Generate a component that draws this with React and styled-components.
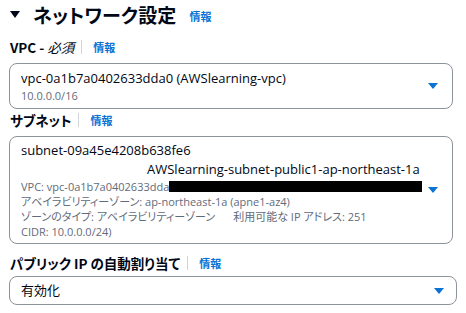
import { createGlobalStyle, styled } from "styled-components";

const GlobalStyle = createGlobalStyle`
  body {
    margin: 0;
    background: #ffffff;
    font-family: "Open Sans", "Noto Sans CJK JP", sans-serif;
    font-feature-settings: "palt";
    color: #000716;
  }
`;

const Page = styled.div`
  width: 466px;
  height: 313px;
  overflow: hidden;
  padding: 0 0 0 10px;
  box-sizing: border-box;
`;

const Header = styled.div`
  display: flex;
  align-items: center;
  height: 28px;
`;

const Caret = styled.span`
  width: 0;
  height: 0;
  border-left: 5px solid transparent;
  border-right: 5px solid transparent;
  border-top: 7px solid #000716;
  margin: 1px 13px 0 0;
`;

const Title = styled.h2`
  margin: 0;
  font-size: 19px;
  font-weight: 700;
  letter-spacing: 0.2px;
  font-family: "Noto Sans CJK JP", sans-serif;
`;

const InfoLink = styled.a`
  color: #0972d3;
  font-size: 11px;
  font-weight: 700;
  font-family: "Noto Sans CJK JP", sans-serif;
  margin-left: ${p => (p.$big ? "13px" : "0")};
  margin-top: ${p => (p.$big ? "4px" : "0")};
  text-decoration: none;
`;

const Field = styled.div`
  margin-top: ${p => p.$top}px;
`;

const LabelRow = styled.div`
  display: flex;
  align-items: center;
  height: 18px;
  margin-bottom: ${p => p.$gap}px;
`;

const Label = styled.span`
  font-size: 13.5px;
  font-weight: 700;
  font-family: "Noto Sans CJK JP", sans-serif;
  em {
    font-style: italic;
    font-weight: 400;
  }
`;

const Divider = styled.span`
  width: 1px;
  height: 14px;
  background: #d1d5db;
  margin: 0 11px 0 7px;
`;

const SelectBox = styled.div`
  display: flex;
  align-items: center;
  margin-left: -1px;
  width: ${p => p.$width}px;
  min-height: ${p => p.$height}px;
  box-sizing: border-box;
  border: 1px solid #8d939b;
  border-radius: 8px;
  padding: ${p => p.$pad};
`;

const SelectBody = styled.div`
  flex: 1;
  min-width: 0;
`;

const Main = styled.div`
  font-size: 13px;
  line-height: 19px;
  white-space: nowrap;
  font-family: "Open Sans", "Noto Sans CJK JP", sans-serif;
  padding-left: ${p => p.$indent || 0}px;
`;

const Sub = styled.div`
  font-size: 11px;
  line-height: 15px;
  color: #5f6b7a;
  white-space: nowrap;
  font-family: "Open Sans", "Noto Sans CJK JP", sans-serif;
`;

const Redact = styled.span`
  display: inline-block;
  width: 253px;
  height: 11px;
  background: #000;
  vertical-align: -1px;
`;

const Gap = styled.span`
  display: inline-block;
  width: 18px;
`;

const Arrow = styled.span`
  width: 0;
  height: 0;
  border-left: 5px solid transparent;
  border-right: 5px solid transparent;
  border-top: 6px solid #0972d3;
  margin-left: 6px;
`;

export default function App() {
  return (
    <Page>
      <GlobalStyle />
      <Header>
        <Caret />
        <Title>ネットワーク設定</Title>
        <InfoLink $big>情報</InfoLink>
      </Header>

      <Field $top={10}>
        <LabelRow $gap={7}>
          <Label>
            VPC - <em>必須</em>
          </Label>
          <Divider />
          <InfoLink>情報</InfoLink>
        </LabelRow>
        <SelectBox $width={444} $height={42} $pad="5px 14px 5px 11px">
          <SelectBody>
            <Main>vpc-0a1b7a0402633dda0 (AWSlearning-vpc)</Main>
            <Sub>10.0.0.0/16</Sub>
          </SelectBody>
          <Arrow />
        </SelectBox>
      </Field>

      <Field $top={2}>
        <LabelRow $gap={7}>
          <Label>サブネット</Label>
          <Divider />
          <InfoLink>情報</InfoLink>
        </LabelRow>
        <SelectBox $width={444} $height={103} $pad="4px 14px 4px 11px">
          <SelectBody>
            <Main>subnet-09a45e4208b638fe6</Main>
            <Main $indent={126}>AWSlearning-subnet-public1-ap-northeast-1a</Main>
            <Sub>
              VPC: vpc-0a1b7a0402633dda<Redact />
            </Sub>
            <Sub>アベイラビリティーゾーン: ap-northeast-1a (apne1-az4)</Sub>
            <Sub>
              ゾーンのタイプ: アベイラビリティーゾーン<Gap />利用可能な IP アドレス: 251
            </Sub>
            <Sub>CIDR: 10.0.0.0/24)</Sub>
          </SelectBody>
          <Arrow />
        </SelectBox>
      </Field>

      <Field $top={10}>
        <LabelRow $gap={4}>
          <Label>パブリック IP の自動割り当て</Label>
          <Divider />
          <InfoLink>情報</InfoLink>
        </LabelRow>
        <SelectBox $width={448} $height={29} $pad="0 12px 0 11px">
          <SelectBody>
            <Main>有効化</Main>
          </SelectBody>
          <Arrow />
        </SelectBox>
      </Field>
    </Page>
  );
}
